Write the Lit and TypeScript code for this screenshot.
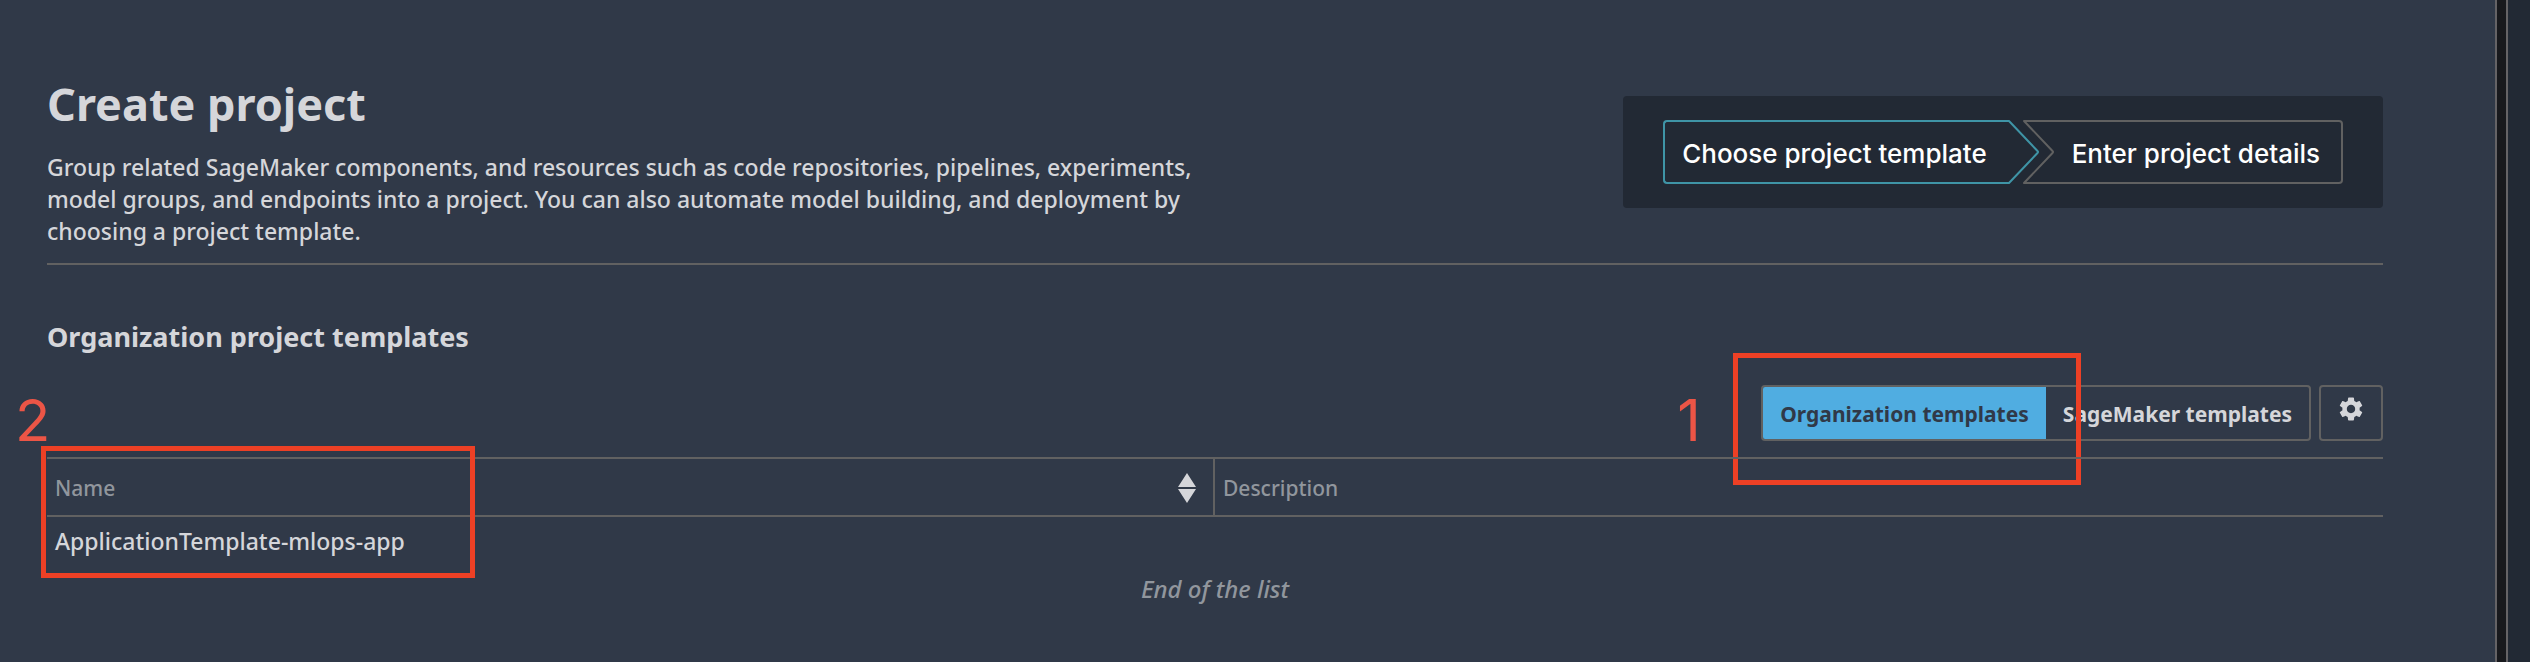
import { LitElement, html, css, svg } from "lit";
import { customElement, state } from "lit/decorators.js";
import { classMap } from "lit/directives/class-map.js";

interface Template {
  name: string;
  description: string;
}

const ORGANIZATION = "Organization templates";
const SAGEMAKER = "SageMaker templates";

@customElement("project-steps")
export class ProjectSteps extends LitElement {
  static styles = css`
    :host {
      display: block;
      padding: 24px 40px;
      border-radius: 4px;
      background: #222934;
      color: #fff;
      font: 500 26px/32px Inter, sans-serif;
    }
    .steps {
      display: flex;
      margin: 0;
      padding: 0;
      list-style: none;
    }
    .step {
      display: flex;
      height: 64px;
      color: #616161;
    }
    .step.current {
      color: #3f94a6;
    }
    .step + .step {
      margin-left: -17px;
    }
    .label {
      box-sizing: border-box;
      display: flex;
      align-items: center;
      padding: 4px 21px 0 17px;
      border: 2px solid currentColor;
      white-space: nowrap;
    }
    .label span {
      color: #fff;
    }
    .first {
      border-right: 0;
      border-radius: 4px 0 0 4px;
    }
    .last {
      border-left: 0;
      border-radius: 0 4px 4px 0;
    }
    .edge {
      display: block;
      width: 32px;
      height: 64px;
      fill: none;
      stroke: currentColor;
      stroke-width: 2;
      stroke-linejoin: round;
    }
  `;

  render() {
    return html`
      <ol class="steps">
        <li class="step current" aria-current="step">
          <div class="label first"><span>Choose project template</span></div>
          <svg class="edge" viewBox="0 0 32 64" aria-hidden="true">
            <path d="M0 1 H1 L29.5 31 Q30.5 32 29.5 33 L1 63 H0" />
          </svg>
        </li>
        <li class="step">
          <svg class="edge" viewBox="0 0 32 64" aria-hidden="true">
            <path d="M32 1 H1 L29.5 31 Q30.5 32 29.5 33 L1 63 H32" />
          </svg>
          <div class="label last"><span>Enter project details</span></div>
        </li>
      </ol>
    `;
  }
}

@customElement("app-root")
export class AppRoot extends LitElement {
  static styles = css`
    :host {
      display: flex;
      min-height: 100vh;
      background: #303948;
      color: #d5d6da;
      font: 500 23px/32px "Noto Sans", "Open Sans", sans-serif;
    }
    .page {
      flex: 1;
      min-width: 0;
      padding: 76px 112px 32px 47px;
    }
    .splitter {
      width: 9px;
      border: solid #656366;
      border-width: 0 2px;
      background: #18191d;
    }
    .side {
      width: 22px;
      background: #222934;
    }
    .header {
      display: flex;
      align-items: flex-start;
      justify-content: space-between;
      gap: 40px;
      padding-bottom: 16px;
      border-bottom: 2px solid #616161;
    }
    .title {
      margin: 0 0 19px;
      font-size: 45px;
      line-height: 56px;
      font-weight: 700;
    }
    .intro {
      max-width: 1160px;
      margin: 0;
    }
    .progress {
      flex: none;
      margin-top: 20px;
    }
    .subtitle {
      margin: 54px 0 30px;
      font-size: 27px;
      line-height: 36px;
      font-weight: 700;
    }
    .toolbar {
      display: flex;
      justify-content: flex-end;
      gap: 8px;
      margin-bottom: 16px;
    }
    .switch {
      position: relative;
    }
    .group,
    .settings {
      box-sizing: border-box;
      display: flex;
      height: 56px;
      border: 2px solid #616161;
      border-radius: 4px;
      overflow: hidden;
    }
    button {
      margin: 0;
      border: 0;
      background: none;
      color: inherit;
      font: inherit;
      cursor: pointer;
    }
    .option {
      padding: 2px 17px 0;
      font-size: 21px;
      font-weight: 700;
    }
    .option.selected {
      background: #50ade1;
      color: #303948;
    }
    .settings {
      width: 64px;
      align-items: center;
      justify-content: center;
      padding: 0 0 8px;
    }
    .gear {
      width: 24px;
      height: 24px;
      fill: currentColor;
    }
    .list {
      position: relative;
    }
    .table {
      width: 100%;
      table-layout: fixed;
      border-collapse: separate;
      border-spacing: 0;
      text-align: left;
    }
    .table th {
      box-sizing: border-box;
      height: 60px;
      padding: 2px 17px 0 8px;
      border: solid #616161;
      border-width: 2px 0;
      color: #91969d;
      font-size: 21px;
      font-weight: 500;
    }
    .table th.sortable {
      border-right-width: 2px;
    }
    .table td {
      height: 48px;
      padding: 0 8px;
    }
    .heading {
      display: flex;
      align-items: center;
      justify-content: space-between;
    }
    .sort {
      display: flex;
      padding: 0;
      color: #d5d6da;
    }
    .arrows {
      width: 18px;
      height: 30px;
      fill: currentColor;
    }
    .end {
      margin: 8px 0 0;
      color: #91969d;
      font-size: 24px;
      font-style: italic;
      text-align: center;
    }
    .mark {
      position: absolute;
      box-sizing: border-box;
      height: 132px;
      border: 5px solid #ed4025;
      pointer-events: none;
    }
    .mark.one {
      left: -28px;
      top: -32px;
      width: 348px;
    }
    .mark.two {
      left: -6px;
      top: -11px;
      width: 434px;
    }
    .number {
      position: absolute;
      color: #ec5546;
      font: 400 58px/58px Inter, sans-serif;
    }
    .number.one {
      left: -84px;
      top: 6px;
    }
    .number.two {
      left: -32px;
      top: -66px;
    }
  `;

  @state() private source = ORGANIZATION;

  private templates: Template[] = [{ name: "ApplicationTemplate-mlops-app", description: "" }];

  private option(label: string) {
    const selected = this.source === label;
    return html`<button
      type="button"
      class=${classMap({ option: true, selected })}
      aria-pressed=${selected}
      @click=${() => (this.source = label)}
    >${label}</button>`;
  }

  private gear() {
    return svg`<svg class="gear" viewBox="2 2 20 20" aria-hidden="true">
      <path d="M19.14 12.94c.04-.3.06-.61.06-.94 0-.32-.02-.64-.07-.94l2.03-1.58c.18-.14.23-.41.12-.61l-1.92-3.32c-.12-.22-.37-.29-.59-.22l-2.39.96c-.5-.38-1.03-.7-1.62-.94l-.36-2.54c-.04-.24-.24-.41-.48-.41h-3.84c-.24 0-.43.17-.47.41l-.36 2.54c-.59.24-1.13.57-1.62.94l-2.39-.96c-.22-.08-.47 0-.59.22L2.74 8.87c-.12.21-.08.47.12.61l2.03 1.58c-.05.3-.09.63-.09.94s.02.64.07.94l-2.03 1.58c-.18.14-.23.41-.12.61l1.92 3.32c.12.22.37.29.59.22l2.39-.96c.5.38 1.03.7 1.62.94l.36 2.54c.05.24.24.41.48.41h3.84c.24 0 .44-.17.47-.41l.36-2.54c.59-.24 1.13-.56 1.62-.94l2.39.96c.22.08.47 0 .59-.22l1.92-3.32c.12-.22.07-.47-.12-.61l-2.01-1.58zM12 15.5c-1.93 0-3.5-1.57-3.5-3.5s1.57-3.5 3.5-3.5 3.5 1.57 3.5 3.5-1.57 3.5-3.5 3.5z" />
    </svg>`;
  }

  render() {
    return html`
      <main class="page">
        <header class="header">
          <div>
            <h1 class="title">Create project</h1>
            <p class="intro">
              Group related SageMaker components, and resources such as code repositories, pipelines,
              experiments, model groups, and endpoints into a project. You can also automate model
              building, and deployment by choosing a project template.
            </p>
          </div>
          <project-steps class="progress"></project-steps>
        </header>

        <h2 class="subtitle">Organization project templates</h2>

        <div class="toolbar">
          <div class="switch">
            <div class="group" role="group" aria-label="Template source">
              ${this.option(ORGANIZATION)}${this.option(SAGEMAKER)}
            </div>
            <span class="number one">1</span>
            <span class="mark one"></span>
          </div>
          <button type="button" class="settings" aria-label="Settings">${this.gear()}</button>
        </div>

        <section class="list">
          <table class="table">
            <thead>
              <tr>
                <th class="sortable" scope="col">
                  <div class="heading">
                    Name
                    <button type="button" class="sort" aria-label="Sort by name">
                      <svg class="arrows" viewBox="0 0 18 30" aria-hidden="true">
                        <path d="M9 0 L18 14 H0 Z M0 16 H18 L9 30 Z" />
                      </svg>
                    </button>
                  </div>
                </th>
                <th scope="col">Description</th>
              </tr>
            </thead>
            <tbody>
              ${this.templates.map((t) => html`<tr><td>${t.name}</td><td>${t.description}</td></tr>`)}
            </tbody>
          </table>
          <p class="end">End of the list</p>
          <span class="number two">2</span>
          <span class="mark two"></span>
        </section>
      </main>
      <div class="splitter" role="separator" aria-orientation="vertical"></div>
      <aside class="side" aria-label="Side panel"></aside>
    `;
  }
}
